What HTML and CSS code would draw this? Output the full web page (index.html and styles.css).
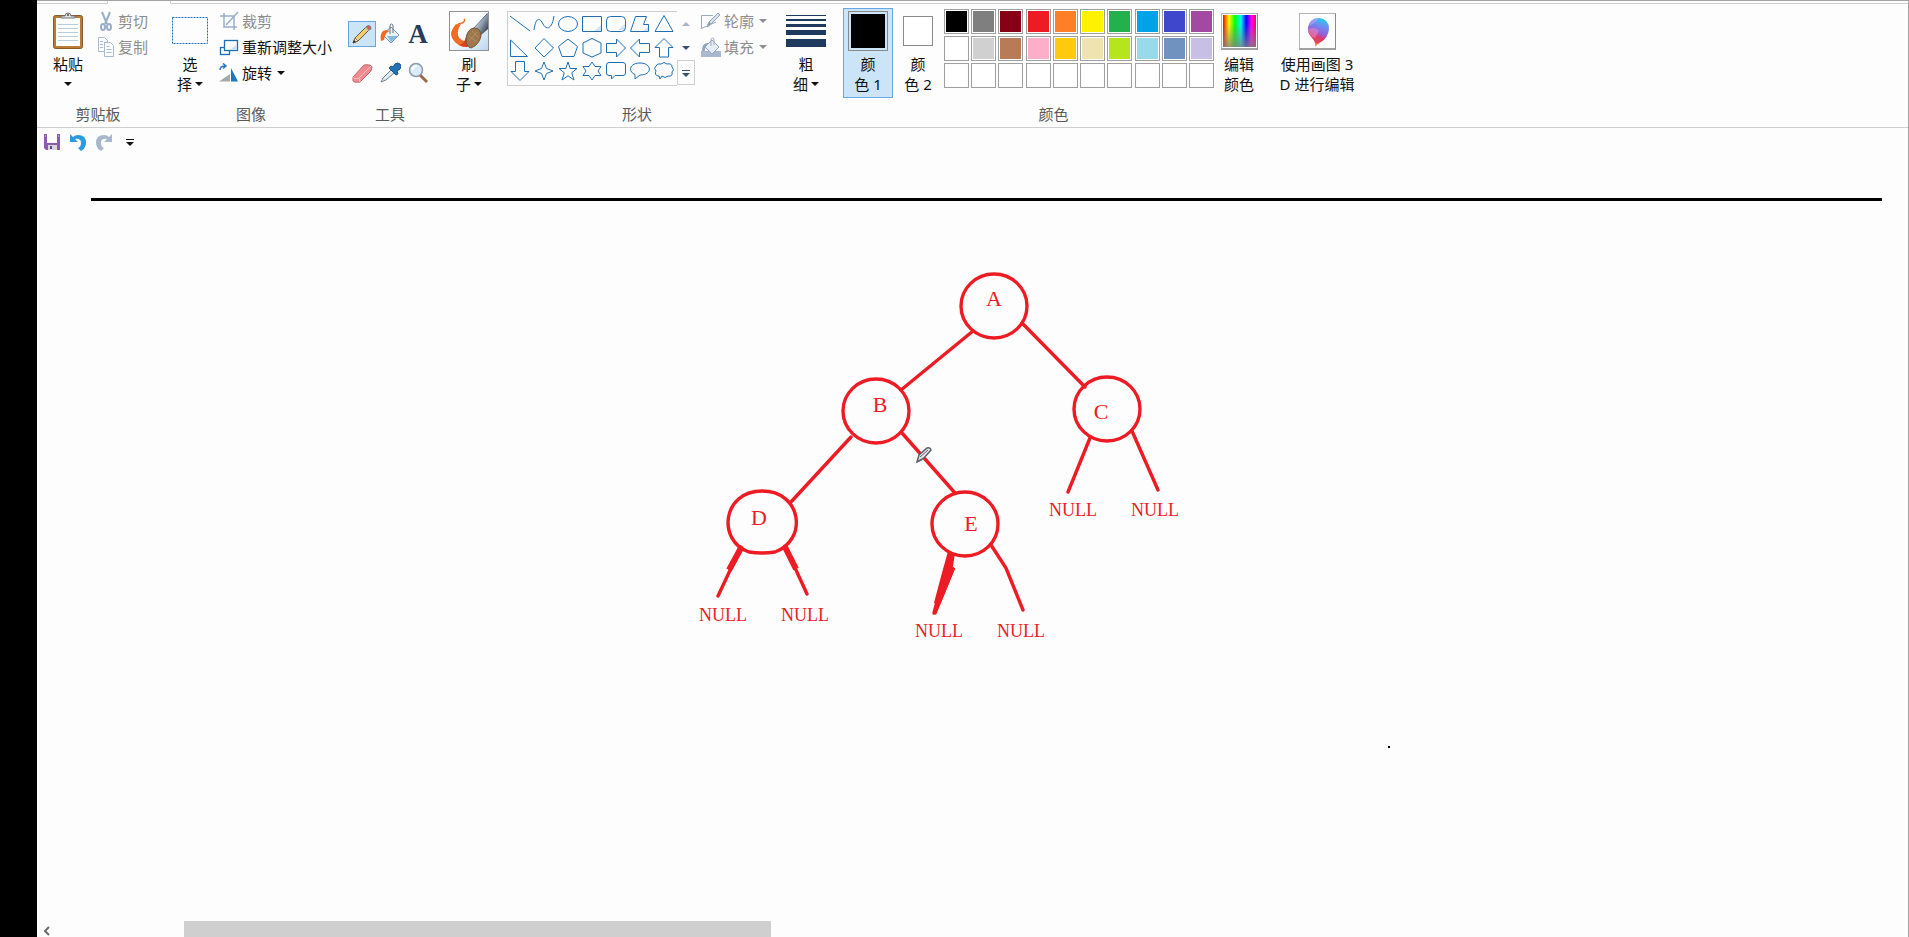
FILE: index.html
```html
<!DOCTYPE html>
<html lang="zh-CN">
<head>
<meta charset="utf-8">
<title>画图</title>
<link rel="stylesheet" href="styles.css">
</head>
<body>
<div class="window">
  <div class="tabs"><span class="tab-edge tab-edge-first"></span><span class="tab-gap"></span><span class="tab-edge tab-edge-rest"></span></div>

  <header class="ribbon">
    <section class="group clipboard">
      <div class="group-body">
        <button class="large paste">
          <span class="pic"><svg width="32" height="38" viewBox="0 0 32 38"><rect x="1.500" y="3.500" width="29" height="33" rx="2" fill="#b97b35" stroke="#8a5a2a"/><path d="M4 6h24v28H4z" fill="#fff"/><path d="M6 12.500h20M6 16.500h20M6 20.500h20M6 24.500h20M6 28.500h20" stroke="#b9cde0"/><path d="M9 6V4h4q0-3 3-3t3 3h4v2z" fill="#e4e6e8" stroke="#6d7378"/><circle cx="16" cy="3" r="1" fill="#444"/></svg></span>
          <span>粘贴</span><span><i class="arrow"></i></span>
        </button>
        <div class="small-list">
          <button class="small off"><svg width="18" height="20" viewBox="0 0 18 20" fill="none" stroke="#9aaec9" stroke-width="2"><path d="M5 1l5 12M13 1L8 13"/><ellipse cx="6" cy="16" rx="2" ry="3"/><ellipse cx="12" cy="16" rx="2" ry="3"/></svg>剪切</button>
          <button class="small off"><svg width="18" height="20" viewBox="0 0 18 20" fill="#fdfdfd" stroke="#a9b9d0"><path d="M1.500 .5h6l3 3v11h-9z"/><path d="M7.500 5.500h6l3 3v11h-9z"/><path d="M3 4.500h3M3 7.500h3M3 10.500h3M9.500 9.500h3M9.500 12.500h5M9.500 15.500h5"/></svg>复制</button>
        </div>
      </div>
      <h2>剪贴板</h2>
    </section>

    <section class="group image">
      <div class="group-body">
        <button class="large select">
          <span class="pic"><svg width="36" height="28" viewBox="0 0 36 28"><rect x=".5" y=".5" width="35" height="26" fill="none" stroke="#1a6fb8" stroke-dasharray="2 1"/></svg></span>
          <span>选</span><span>择<i class="arrow"></i></span>
        </button>
        <div class="small-list">
          <button class="small off"><svg width="20" height="20" viewBox="0 0 20 20" fill="none" stroke="#9aaec9"><path d="M5 2v14h13M1 5h14v14" stroke-width="1.500"/><path d="M7 14L19 1" stroke-width="1.500"/></svg>裁剪</button>
          <button class="small"><svg width="20" height="20" viewBox="0 0 20 20" fill="#fdfdfd" stroke="#1c6fb5" stroke-width="1.300"><rect x="1.500" y="10.500" width="9" height="7"/><rect x="5.500" y="3.500" width="13" height="10"/><path d="M17.800 7v6h-7z" fill="#cfe2f4" stroke="none"/></svg>重新调整大小</button>
          <button class="small"><svg width="20" height="20" viewBox="0 0 20 20"><path d="M11 18.500V11L0 18.500z" fill="#a8a8a8"/><path d="M12 18.500V5l7 13.500z" fill="#1c79bf"/><path d="M1 7q0-4 5-4M4 .5L7 3 4 5.500" fill="none" stroke="#2677c4" stroke-width="1.500"/></svg>旋转<i class="arrow"></i></button>
        </div>
      </div>
      <h2>图像</h2>
    </section>

    <section class="group tools">
      <div class="group-body">
        <div class="tool-grid">
          <button class="tool active" aria-label="铅笔"><svg width="22" height="22" viewBox="0 0 22 22"><path d="M2 20l2-5L15 4l3 3L7 18z" fill="#f3cd76" stroke="#655b48"/><path d="M2 20l2-5 3 3z" fill="#f4dfc2" stroke="#655b48" stroke-width=".7"/><path d="M2 20l1-3 2 2z" fill="#222"/><path d="M15 4l1-1q2-1 3 0t1 3l-2 1z" fill="#da5a68" stroke="#69656a" stroke-width=".7"/><path d="M14 5l3 3 1-1-3-3z" fill="#a9c6b5"/></svg></button>
          <button class="tool" aria-label="填充颜色"><svg width="22" height="22" viewBox="0 0 22 22"><path d="M5 10l7-6 8 8-8 8-7-7z" fill="#e6f1fa" stroke="#7494b3"/><path d="M8 13h11l-7 6z" fill="#87b9dd"/><path d="M2 18Q0 8 7 7l4 1q-5 1-6 9z" fill="#ee6a28"/><path d="M11 11V3q0-2 1.500-2T14 3v7" fill="none" stroke="#657383"/></svg></button>
          <button class="tool letter" aria-label="文本">A</button>
          <button class="tool" aria-label="橡皮擦"><svg width="22" height="22" viewBox="0 0 22 22"><path d="M2 15L13 3q7-1 8 2l-1 4L9 20q-6 1-7-1z" fill="#f18b90" stroke="#c7656d"/><path d="M2 15q1 3 6 1L20 4M8 16l1 4" fill="none" stroke="#fac1c3"/></svg></button>
          <button class="tool" aria-label="颜色选取器"><svg width="22" height="22" viewBox="0 0 22 22"><path d="M2 20l2-4 8-8 3 3-8 7z" fill="#dceaf4" stroke="#6f8293"/><path d="M10 6l2-2 2 1 2-3q3-2 5 0t0 5l-3 2 1 3-2 1z" fill="#2272b5" stroke="#17568d"/></svg></button>
          <button class="tool" aria-label="放大镜"><svg width="22" height="22" viewBox="0 0 22 22"><path d="M13 13l7 7" stroke="#9a6947" stroke-width="3"/><circle cx="9" cy="8" r="6.500" fill="#dcebf9" stroke="#8d9baa" stroke-width="1.500"/><path d="M5 8q1-4 5-4" stroke="#fff" stroke-width="2" fill="none"/></svg></button>
        </div>
      </div>
      <h2>工具</h2>
    </section>

    <section class="group brushes">
      <div class="group-body">
        <button class="large brush">
          <span class="pic"><svg width="40" height="40" viewBox="0 0 40 40"><defs><linearGradient id="brush-bg" x1="0" y1="0" x2="1" y2="1"><stop offset=".4" stop-color="#fff"/><stop offset="1" stop-color="#b9d7f0"/></linearGradient><linearGradient id="metal" x1="0" y1="0" x2="1" y2="1"><stop offset="0" stop-color="#f5f7fa"/><stop offset=".5" stop-color="#8f9daf"/><stop offset="1" stop-color="#18202d"/></linearGradient></defs><rect x=".5" y=".5" width="39" height="39" fill="url(#brush-bg)" stroke="#929292"/><path d="M26 17L38 2h1v16l-8 7z" fill="url(#metal)"/><path d="M24 18L38 3" stroke="#667180" fill="none"/><path d="M7 13Q0 21 3 27q5 9 15 9l2-5Q10 30 9 24q-1-5 3-11l-3 1z" fill="#f26b22"/><path d="M7 15q3-3 6-3 4-2 2-4" fill="none" stroke="#f26b22" stroke-width="1.500"/><path d="M10 34q5-1 7-8l4 8-3 2q-5 0-8-2z" fill="#d9411e"/><path d="M17 28q1-10 8-11 7 0 7 8-2 9-10 12-5-1-5-9z" fill="#9d774d" stroke="#755637"/><path d="M20 30l8-9M20 25l8 6M23 20l6 6" stroke="#bc986a" stroke-width=".7"/></svg></span>
          <span>刷</span><span>子<i class="arrow"></i></span>
        </button>
      </div>
    </section>

    <section class="group shapes">
      <div class="group-body">
        <div class="gallery">
          <button aria-label="直线"><svg viewBox="0 0 24 24"><path d="M2 4l20 15"/></svg></button>
          <button aria-label="曲线"><svg viewBox="0 0 24 24"><path d="M2 18C4 4 8 6 11 12s9 6 11-8"/></svg></button>
          <button aria-label="椭圆"><svg viewBox="0 0 24 24"><ellipse cx="12" cy="12" rx="9.500" ry="7.500"/></svg></button>
          <button aria-label="矩形"><svg viewBox="0 0 24 24"><path class="tint" d="M21 13v6h-7z"/><path d="M2.500 4.500h19v15h-19z"/></svg></button>
          <button aria-label="圆角矩形"><svg viewBox="0 0 24 24"><path class="tint" d="M21 12v6h-7z"/><rect x="2.500" y="4.500" width="19" height="15" rx="4"/></svg></button>
          <button aria-label="多边形"><svg viewBox="0 0 24 24"><path class="tint" d="M21 14v5h-6z"/><path d="M7.500 4.500h11l-3 8h5v7h-18z"/></svg></button>
          <button aria-label="三角形"><svg viewBox="0 0 24 24"><path d="M12 3.500l9 16H3z"/></svg></button>
          <button aria-label="直角三角形"><svg viewBox="0 0 24 24"><path d="M2.500 4v16.500h17z"/></svg></button>
          <button aria-label="菱形"><svg viewBox="0 0 24 24"><path d="M12 2.500l9.500 9.500-9.500 9L3 12z"/></svg></button>
          <button aria-label="五边形"><svg viewBox="0 0 24 24"><path d="M12 3l9.500 7.500L18 20.500H6L2.500 10.500z"/></svg></button>
          <button aria-label="六边形"><svg viewBox="0 0 24 24"><path d="M12 2.500l9 4.500v10l-9 4-9-4V7z"/></svg></button>
          <button aria-label="右箭头"><svg viewBox="0 0 24 24"><path d="M2.500 7.500h10V3l9 9-9 9v-4.500h-10z"/></svg></button>
          <button aria-label="左箭头"><svg viewBox="0 0 24 24"><path d="M21.500 7.500h-10V3l-9 9 9 9v-4.500h10z"/></svg></button>
          <button aria-label="上箭头"><svg viewBox="0 0 24 24"><path d="M7.500 21v-9.500H3l9-9 9 9h-4.500V21z"/></svg></button>
          <button aria-label="下箭头"><svg viewBox="0 0 24 24"><path d="M7.500 1.500v10H3l9 9 9-9h-4.500v-10z"/></svg></button>
          <button aria-label="四角星"><svg viewBox="0 0 24 24"><path d="M12 2l2.500 6.500L21 11l-6.500 2.500L12 20l-2.500-6.500L3 11l6.500-2.500z"/></svg></button>
          <button aria-label="五角星"><svg viewBox="0 0 24 24"><path d="M12 2l2.200 6.500H21l-5.300 4.300L18 20l-6-4.200L6 20l2.300-7.200L3 8.500h6.800z"/></svg></button>
          <button aria-label="六角星"><svg viewBox="0 0 24 24"><path d="M12 2l3 4.500h6L18 11l3 4.500h-6L12 20l-3-4.500H3L6 11 3 6.500h6z"/></svg></button>
          <button aria-label="圆角矩形标注"><svg viewBox="0 0 24 24"><path d="M5 2.500h14q2.500 0 2.500 2.500v8q0 2.500-2.500 2.500h-8L7.500 19v-3.500H5q-2.500 0-2.500-2.500V5q0-2.500 2.500-2.500z"/></svg></button>
          <button aria-label="椭圆形标注"><svg viewBox="0 0 24 24"><path d="M7 19v-4.500C0 12 1 3 12 3c12 0 13 12 0 12z"/></svg></button>
          <button aria-label="云形标注"><svg viewBox="0 0 24 24"><path d="M6 16q-4-1-2-5-3-3 0-5 1-3 5-2 3-3 6 0 5-1 5 3 3 3 0 5 1 5-4 4-3 3-6 0l-2 3-1-3z"/></svg></button>
        </div>
        <div class="gallery-scroll">
          <button aria-label="上一行"><i class="arrow up"></i></button>
          <button aria-label="下一行"><i class="arrow navy"></i></button>
          <button class="more" aria-label="其他"><i class="arrow navy bar"></i></button>
        </div>
        <div class="small-list">
          <button class="small off"><svg width="21" height="20" viewBox="0 0 21 20" fill="none" stroke="#9aaabd"><path d="M13 4.500H1.500v13L16 11"/><path d="M7 16l2-5 9-9 2 2-9 9z" fill="#d2deeb"/><path d="M7 16l2-5 2 2z" fill="#8294a8"/></svg>轮廓<i class="arrow"></i></button>
          <button class="small off"><svg width="21" height="20" viewBox="0 0 21 20"><path d="M1 14h20v6H1z" fill="#a9b7cf"/><path d="M5 10l7-7 7 7-7 7z" fill="#e5edf6" stroke="#93a6bf"/><path d="M2 14q0-9 7-8-4 3-4 8z" fill="#95a6c1"/><path d="M11 9V3q0-2 1.500-2T14 3v5" fill="none" stroke="#9eacbc"/></svg>填充<i class="arrow"></i></button>
        </div>
      </div>
      <h2>形状</h2>
    </section>

    <section class="group size">
      <div class="group-body">
        <button class="large thickness">
          <span class="pic"><svg width="40" height="32" viewBox="0 0 40 32" fill="#1f3a5f"><path d="M0 0h40v1H0zM0 4h40v2H0zM0 9h40v3H0zM0 15h40v5H0zM0 24h40v8H0z"/></svg></span>
          <span>粗</span><span>细<i class="arrow"></i></span>
        </button>
      </div>
    </section>

    <section class="group colors">
      <div class="group-body">
        <button class="large color-button active"><span class="pic"><span class="swatch swatch-one"></span></span><span>颜</span><span>色 1</span></button>
        <button class="large color-button"><span class="pic"><span class="swatch swatch-two"></span></span><span>颜</span><span>色 2</span></button>
        <div class="palette">
          <button class="black" aria-label="黑色"></button><button class="gray" aria-label="灰色-50%"></button><button class="dark-red" aria-label="深红色"></button><button class="red" aria-label="红色"></button><button class="orange" aria-label="橙色"></button><button class="yellow" aria-label="黄色"></button><button class="green" aria-label="绿色"></button><button class="turquoise" aria-label="青绿"></button><button class="indigo" aria-label="靛青"></button><button class="purple" aria-label="紫色"></button>
          <button aria-label="白色"></button><button class="light-gray" aria-label="灰色-25%"></button><button class="brown" aria-label="褐色"></button><button class="rose" aria-label="玫瑰色"></button><button class="gold" aria-label="金色"></button><button class="cream" aria-label="浅黄色"></button><button class="lime" aria-label="酸橙色"></button><button class="pale-blue" aria-label="淡青绿色"></button><button class="steel" aria-label="蓝灰色"></button><button class="lavender" aria-label="淡紫色"></button>
          <button aria-label="自定义 1"></button><button aria-label="自定义 2"></button><button aria-label="自定义 3"></button><button aria-label="自定义 4"></button><button aria-label="自定义 5"></button><button aria-label="自定义 6"></button><button aria-label="自定义 7"></button><button aria-label="自定义 8"></button><button aria-label="自定义 9"></button><button aria-label="自定义 10"></button>
        </div>
        <button class="large edit-colors"><span class="pic"><span class="framed rainbow"></span></span><span>编辑</span><span>颜色</span></button>
      </div>
      <h2>颜色</h2>
    </section>

    <section class="group paint3d">
      <div class="group-body">
        <button class="large"><span class="pic"><span class="framed"><svg width="34" height="34" viewBox="0 0 34 34"><defs><linearGradient id="drop" x1=".6" y1="0" x2=".35" y2="1"><stop offset="0" stop-color="#25cdf1"/><stop offset=".25" stop-color="#6d8cf0"/><stop offset=".5" stop-color="#9061dd"/><stop offset=".65" stop-color="#dc3b72"/><stop offset=".82" stop-color="#e2484f"/><stop offset="1" stop-color="#ffc116"/></linearGradient></defs><path d="M14 32q1-5-3-9Q6 18 7 12 9 3 18 3q10 1 10 11-1 9-8 13-4 2-6 5z" fill="url(#drop)"/><path d="M7 14q1 8 7 9l4-7q-4-5-11-2z" fill="#ee82b8" opacity=".6"/><path d="M8 11q2-8 10-8l-5 5z" fill="#b8a0f5" opacity=".7"/></svg></span></span><span>使用画图 3</span><span>D 进行编辑</span></button>
      </div>
    </section>
  </header>

  <nav class="quick">
    <button aria-label="保存"><svg width="16" height="16" viewBox="0 0 16 16"><path d="M0 0h16v16H2l-2-2z" fill="#8a5bb0"/><path d="M3 0h10v9H3z" fill="#fff"/><path d="M4 11h9v5H4z" fill="#d9d5de"/><path d="M6 12h2v3H6z" fill="#62477c"/><path d="M1 2h1M14 2h1" stroke="#ddd"/></svg></button>
    <button aria-label="撤消"><svg width="18" height="18" viewBox="0 0 18 18"><path d="M1 1v8h8L6 6q6-1 6 4 0 4-3 5l3 3q5-3 5-8 0-8-8-8-3 0-5 2z" fill="#2b9bdc"/></svg></button>
    <button aria-label="重做"><svg width="18" height="18" viewBox="0 0 18 18"><path d="M17 1v8H9l3-3q-6-1-6 4 0 4 3 5l-3 3q-5-3-5-8 0-8 8-8 3 0 5 2z" fill="#a9b7cc"/></svg></button>
    <button class="customize" aria-label="自定义快速访问工具栏"><i class="arrow bar"></i></button>
  </nav>

  <main class="canvas">
    <div class="rule"></div>
    <svg class="tree" width="710" height="500" viewBox="690 260 710 500">
      <g class="strokes">
        <ellipse cx="994" cy="306" rx="33" ry="32"/>
        <ellipse cx="876" cy="411" rx="33" ry="32"/>
        <ellipse cx="1107" cy="409" rx="33" ry="32"/>
        <path d="M749 552C717 541 722 491 762 491s46 49 13 61q-13 2-26 0z"/>
        <ellipse cx="965" cy="524" rx="33" ry="32"/>
        <path d="M973 331L901 390M1022 323l63 64M851 437l-61 66M902 433l53 60M1090 438l-22 54M1132 431l26 59"/>
        <path d="M741 547l-23 49M785 546l22 48M950 553l-16 60M991 545l15 23 17 42M953 569l-18 44"/>
        <path class="thick" d="M741 548l-12 22M785 547l11 22"/>
        <path class="blob" d="M949 554l4 1-2 13 2 1-14 34-3-1 8-30z"/>
      </g>
      <g class="names">
        <text x="994" y="306">A</text><text x="880" y="412">B</text><text x="1101" y="419">C</text><text x="759" y="525">D</text><text x="971" y="531">E</text>
      </g>
      <g class="nulls">
        <text x="699" y="621">NULL</text><text x="781" y="621">NULL</text><text x="915" y="637">NULL</text><text x="997" y="637">NULL</text><text x="1049" y="516">NULL</text><text x="1131" y="516">NULL</text>
      </g>
      <path d="M917 462l2-7 8-7q3-1 4 2l-7 8z" fill="#e6e7ea" stroke="#5d626b" stroke-width="1.500"/><path d="M920 457l8-7M917 462l5-2" stroke="#5d626b" fill="none"/>
      <path d="M1388 746h2v2h-2z"/>
    </svg>
  </main>

  <footer class="scrollbar">
    <button aria-label="向左滚动"><svg width="8" height="10" viewBox="0 0 8 10"><path d="M7 1L3 5l4 4" fill="none" stroke="#6b6b6b" stroke-width="2"/></svg></button>
    <div class="track"><div class="thumb"></div></div>
  </footer>
</div>
</body>
</html>
```
FILE: styles.css
```css
* { box-sizing: border-box; }
body {
  margin: 0;
  background: #000;
  color: #111;
  font: 15px/20px "Noto Sans", "Noto Sans CJK SC", sans-serif;
}
button {
  margin: 0;
  padding: 0;
  border: 1px solid transparent;
  background: none;
  color: inherit;
  font: inherit;
}
svg { display: block; flex: none; }
.window {
  display: flex;
  flex-direction: column;
  min-height: 100vh;
  margin-left: 37px;
  background: #fdfdfd;
  border-top: 1px solid #a3a3a3;
  border-right: 1px solid #a3a3a3;
}

.tabs { display: flex; height: 3px; }
.tab-edge { border-bottom: 1px solid #cfcfcf; }
.tab-edge-first { width: 71px; border-right: 1px solid #cfcfcf; }
.tab-gap { width: 62px; }
.tab-edge-rest { flex: 1; border-left: 1px solid #cfcfcf; }

.ribbon {
  display: flex;
  padding: 4px 0 3px;
  border-bottom: 1px solid #cfcfcf;
}
.group { flex: none; }
.group-body { display: flex; height: 90px; }
.group h2 {
  margin: 6px 0 0;
  color: #5a5a5a;
  font-size: 15px;
  font-weight: 400;
  text-align: center;
}
.clipboard { width: 122px; padding-left: 7px; }
.clipboard h2, .image h2, .colors h2 { margin-left: -7px; }
.shapes h2, .tools h2 { margin-left: -5px; }
.image { width: 184px; padding-left: 7px; }
.tools { width: 94px; padding-left: 5px; }
.brushes { width: 65px; padding-left: 8px; }
.shapes { width: 270px; padding-left: 5px; }
.size { width: 63px; padding-left: 8px; }
.colors { width: 436px; padding-left: 8px; }
.paint3d { padding-left: 4px; }

.large {
  display: flex;
  flex-direction: column;
  align-items: center;
  min-width: 48px;
  white-space: nowrap;
}
.large > span { display: flex; align-items: center; justify-content: center; height: 20px; }
.large > .pic { height: 44px; margin-bottom: 1px; }
.large .arrow { margin-left: 3px; }
.paste .arrow { margin-left: 0; }
.thickness { min-width: 52px; }
.color-button { width: 50px; }
.paint3d .large { min-width: 84px; }
.active { background: #cce4f7; border-color: #66a7e8; }

.small-list { display: flex; flex-direction: column; padding-left: 4px; }
.small {
  display: flex;
  align-items: center;
  gap: 3px;
  height: 26px;
  white-space: nowrap;
}
.small .arrow { margin-left: 2px; }
.off { color: #8e8e8e; }

.arrow {
  display: block;
  width: 8px;
  border: solid transparent;
  border-width: 4px 4px 0;
  border-top-color: #111;
}
.off .arrow { border-top-color: #8e8e8e; }
.arrow.navy { border-top-color: #34506e; }
.arrow.up { border-width: 0 4px 4px; border-bottom-color: #a9b3cc; }
.arrow.bar { position: relative; }
.arrow.bar::before {
  content: "";
  position: absolute;
  left: -4px;
  top: -7px;
  width: 8px;
  height: 1px;
  background: #34506e;
}
.quick .arrow.bar::before { background: #111; }

.tool-grid {
  display: grid;
  grid-template-columns: repeat(3, 28px);
  grid-auto-rows: 26px;
  row-gap: 13px;
  padding-top: 13px;
}
.tool { display: flex; align-items: center; justify-content: center; }
.letter { color: #263c60; font: bold 27px/24px "Liberation Serif", serif; }

.gallery {
  display: grid;
  grid-template-columns: repeat(7, 24px);
  grid-auto-rows: 24px;
  width: 170px;
  height: 75px;
  margin-top: 3px;
  border: 1px solid #cfcfcf;
  border-right: 0;
}
.gallery button { border: 0; }
.gallery svg { width: 24px; height: 24px; fill: none; stroke: #1f6fb2; }
.gallery .tint { fill: #cfe3f5; stroke: none; }
.gallery-scroll {
  display: grid;
  grid-template-columns: 18px;
  grid-template-rows: 25px 24px 25px;
  margin-top: 3px;
}
.gallery-scroll button { display: flex; align-items: center; justify-content: center; }
.gallery-scroll .more { padding-top: 4px; border-color: #cfcfcf; }

.swatch { border: 1px solid #8a8a8a; }
.swatch-one { width: 40px; height: 40px; padding: 2px; background: #000 content-box; }
.swatch-two { width: 30px; height: 30px; background: #fff; }
.palette {
  display: grid;
  grid-template-columns: repeat(10, 25px);
  grid-auto-rows: 25px;
  justify-content: space-between;
  row-gap: 2px;
  width: 272px;
  padding: 1px 1px 0;
}
.palette button { padding: 1px; border-color: #a0a0a0; background-color: #fff; background-clip: content-box; }
.palette .black { background-color: #000; }
.palette .gray { background-color: #7f7f7f; }
.palette .dark-red { background-color: #880015; }
.palette .red { background-color: #ed1c24; }
.palette .orange { background-color: #ff7f27; }
.palette .yellow { background-color: #fff200; }
.palette .green { background-color: #22b14c; }
.palette .turquoise { background-color: #00a2e8; }
.palette .indigo { background-color: #3f48cc; }
.palette .purple { background-color: #a349a4; }
.palette .light-gray { background-color: #d0d0d0; }
.palette .brown { background-color: #b97a57; }
.palette .rose { background-color: #ffaec9; }
.palette .gold { background-color: #ffc90e; }
.palette .cream { background-color: #efe4b0; }
.palette .lime { background-color: #b5e61d; }
.palette .pale-blue { background-color: #99d9ea; }
.palette .steel { background-color: #7092be; }
.palette .lavender { background-color: #c8bfe7; }
.framed {
  width: 37px;
  height: 37px;
  padding: 1px;
  border: 1px solid #b5b5b5;
  border-right-color: #8a8a8a;
  border-bottom: 2px solid #a0a0a0;
}
.rainbow {
  background:
    linear-gradient(#80808000 25%, #808080cc) content-box,
    linear-gradient(90deg, #f00, #ff0 18%, #0f0 36%, #0ff 54%, #00f 70%, #f0f 86%, #f03) content-box;
}

.quick { display: flex; align-items: center; height: 30px; padding: 0 0 2px 5px; gap: 6px; }
.quick button { display: flex; align-items: center; justify-content: center; width: 20px; height: 20px; }
.quick .customize { padding-top: 4px; }

.canvas { flex: 1; padding: 40px 26px 0 54px; }
.rule { height: 3px; background: #000; }
.tree { margin: 59px 0 0 599px; }
.strokes { fill: none; stroke: #ed1c24; stroke-width: 3.4; stroke-linecap: round; }
.strokes .thick { stroke-width: 6; stroke-linecap: butt; }
.strokes .blob { fill: #ed1c24; }
.names { fill: #ed1c24; font: 22px "Liberation Serif", serif; text-anchor: middle; }
.nulls { fill: #ed1c24; font: 18px "Liberation Serif", serif; }

.scrollbar { display: flex; height: 16px; }
.scrollbar button { display: flex; align-items: center; padding: 4px 0 0 4px; width: 18px; }
.track { flex: 1; }
.thumb { width: 587px; max-width: 80%; height: 16px; margin-left: 129px; background: #cfcfcf; }
```
